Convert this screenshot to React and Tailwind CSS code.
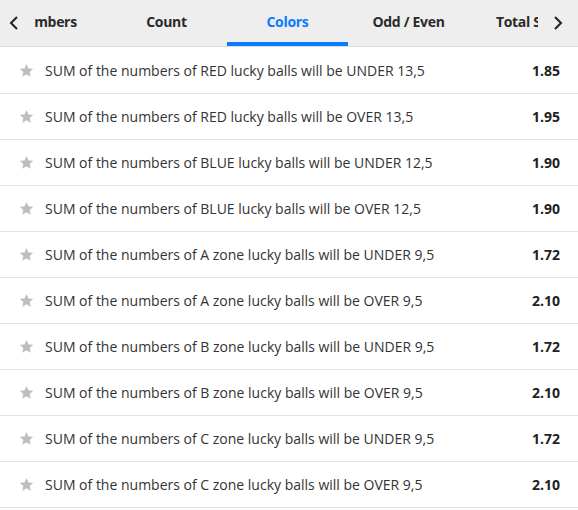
import React from "react";

const tabs = ["Numbers", "Count", "Colors", "Odd / Even", "Total Sum"];

const rows = [
  ["SUM of the numbers of RED lucky balls will be UNDER 13,5", "1.85"],
  ["SUM of the numbers of RED lucky balls will be OVER 13,5", "1.95"],
  ["SUM of the numbers of BLUE lucky balls will be UNDER 12,5", "1.90"],
  ["SUM of the numbers of BLUE lucky balls will be OVER 12,5", "1.90"],
  ["SUM of the numbers of A zone lucky balls will be UNDER 9,5", "1.72"],
  ["SUM of the numbers of A zone lucky balls will be OVER 9,5", "2.10"],
  ["SUM of the numbers of B zone lucky balls will be UNDER 9,5", "1.72"],
  ["SUM of the numbers of B zone lucky balls will be OVER 9,5", "2.10"],
  ["SUM of the numbers of C zone lucky balls will be UNDER 9,5", "1.72"],
  ["SUM of the numbers of C zone lucky balls will be OVER 9,5", "2.10"],
];

const Chevron = ({ dir }) => (
  <svg width="10" height="16" viewBox="0 0 10 16" fill="none" stroke="#222" strokeWidth="2">
    {dir === "left" ? <path d="M8 2 2 8l6 6" /> : <path d="M2 2l6 6-6 6" />}
  </svg>
);

const Star = () => (
  <svg width="15" height="15" viewBox="0 0 24 24" fill="#bdbdbd">
    <path d="M12 1.5l3.2 7.1 7.6.7-5.8 5.1 1.8 7.6L12 18l-6.8 4 1.8-7.6L1.2 9.3l7.6-.7z" />
  </svg>
);

export default function App() {
  return (
    <div className="w-[578px] h-[510px] bg-white overflow-hidden" style={{ fontFamily: '"Open Sans", sans-serif' }}>
      <div className="h-[47px] bg-[#eeeeee] border-b border-[#dddddd] flex items-stretch">
        <div className="w-[34px] flex items-center pl-[9px]">
          <Chevron dir="left" />
        </div>
        <div className="flex-1 overflow-hidden">
          <div className="flex h-full -ml-[49px]">
            {tabs.map((t) => (
              <div
                key={t}
                className={`w-[121px] shrink-0 flex items-center justify-center text-[14px] font-bold tracking-[-0.3px] border-b-4 ${
                  t === "Colors" ? "text-[#0a7cff] border-[#0a7cff]" : "text-[#2a2a2a] border-transparent"
                }`}
              >
                <span>{t}</span>
              </div>
            ))}
          </div>
        </div>
        <div className="w-[40px] flex items-center justify-center">
          <Chevron dir="right" />
        </div>
      </div>
      <div className="pt-px">
        {rows.map(([label, odd], i) => (
          <div key={i} className="h-[46px] flex items-center border-b border-[#e4e4e4] pl-[19px] pr-[18px]">
            <Star />
            <span className="ml-[11px] text-[14px] text-[#333333] flex-1">{label}</span>
            <span className="text-[14px] font-bold text-[#222222]">{odd}</span>
          </div>
        ))}
      </div>
    </div>
  );
}
